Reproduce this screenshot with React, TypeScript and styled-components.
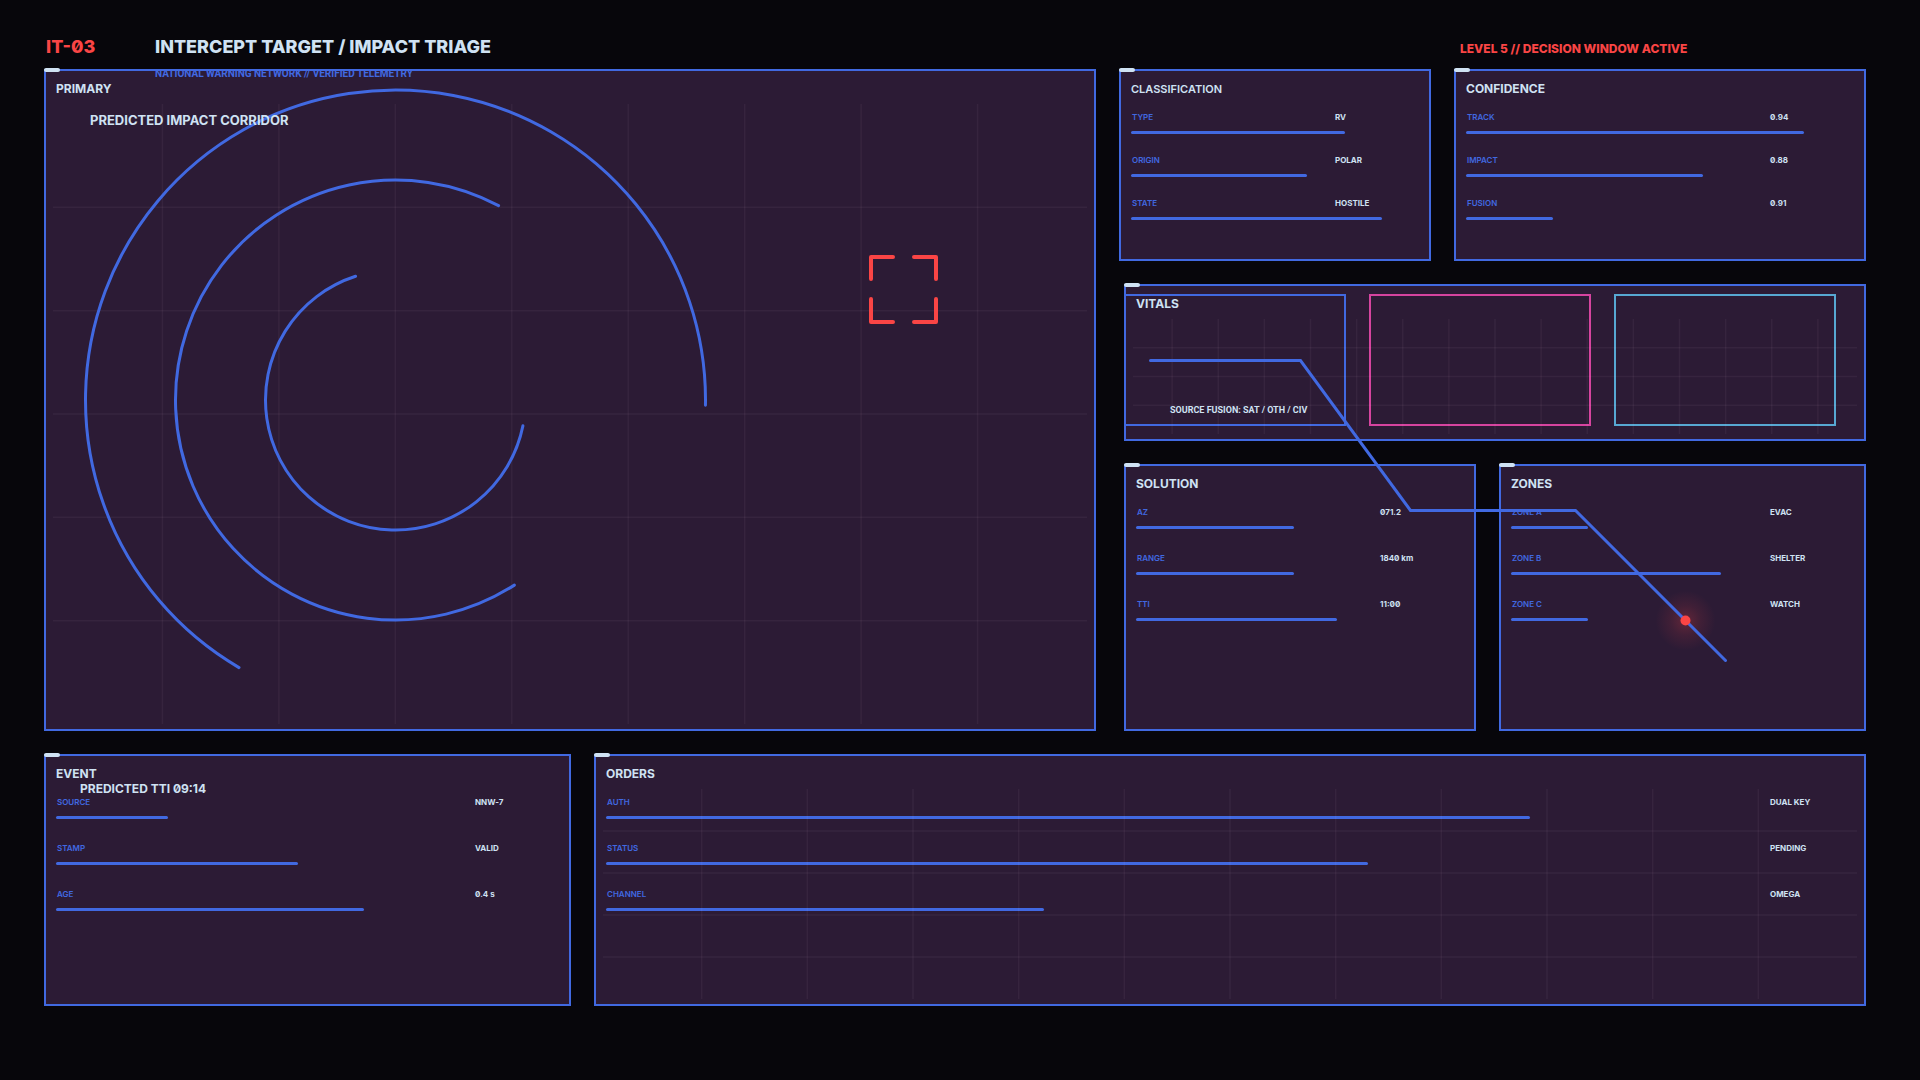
import React from 'react';
import styled, { createGlobalStyle } from 'styled-components';

const color = {
  page: '#07060b',
  panel: '#2c1b35',
  blue: '#4169e1',
  ice: '#cfe2f3',
  red: '#fa4545',
  pink: '#d6449f',
  cyan: '#57a8d2',
  grid: 'rgba(255, 220, 240, 0.05)',
};

const GlobalStyle = createGlobalStyle`
  * { box-sizing: border-box; }
  body {
    margin: 0;
    background: ${color.page};
    color: ${color.ice};
    font-family: Inter, Roboto, "Liberation Sans", sans-serif;
    font-feature-settings: "zero" 1;
  }
  h1, h2, p, dl, dd { margin: 0; font-weight: inherit; }
`;

const Page = styled.main`
  min-height: 100vh;
  padding: 37px 54px 24px 44px;
`;

const Header = styled.header`
  display: grid;
  grid-template-columns: 109px 1fr 406px;
  height: 32px;
  padding-left: 2px;
  line-height: 20px;
  font-weight: 800;
`;

const Code = styled.span`
  color: ${color.red};
  font-size: 18px;
`;

const TitleBlock = styled.div`
  position: relative;
  z-index: 1;
`;

const Title = styled.h1`
  font-size: 18px;
`;

const Subtitle = styled.p`
  margin-top: 10px;
  line-height: 14px;
  font-family: Roboto, "Liberation Sans", sans-serif;
  font-size: 10px;
  font-weight: 700;
  color: ${color.blue};
`;

const Alert = styled.p`
  padding-top: 2px;
  font-size: 12px;
  color: ${color.red};
`;

const Board = styled.div`
  display: flex;
  flex-direction: column;
  gap: 23px;
`;

const Split = styled.div<{ $columns: string }>`
  display: grid;
  grid-template-columns: ${(p) => p.$columns};
  gap: 23px;
`;

const SideColumn = styled.div`
  position: relative;
  display: flex;
  flex-direction: column;
  gap: 23px;
`;

const Inset = styled.div`
  display: flex;
  flex-direction: column;
  gap: 23px;
  padding-left: 5px;
`;

const PanelBox = styled.section<{ $minHeight: number }>`
  position: relative;
  min-width: 0;
  min-height: ${(p) => p.$minHeight}px;
  padding: 10px 12px 10px 10px;
  border: 2px solid ${color.blue};
  background: ${color.panel};

  &::before {
    content: '';
    position: absolute;
    top: -3px;
    left: -2px;
    width: 16px;
    height: 4px;
    border-radius: 2px;
    background: ${color.ice};
  }
`;

const PanelHead = styled.div`
  position: relative;
  min-height: 30px;
`;

const PanelTitle = styled.h2<{ $small?: boolean }>`
  font-size: ${(p) => (p.$small ? 11 : 12)}px;
  line-height: 16px;
  font-weight: ${(p) => (p.$small ? 600 : 700)};
`;

const Caption = styled.p`
  padding-left: 24px;
  font-size: 12px;
  line-height: 14px;
  font-weight: 700;
`;

const CorridorCaption = styled.p`
  position: relative;
  padding: 1px 34px 0;
  font-size: 13px;
  line-height: 16px;
  font-weight: 700;
`;

const Readings = styled.dl<{ $gap: number }>`
  display: flex;
  flex-direction: column;
  gap: ${(p) => p.$gap}px;
  position: relative;
`;

const Reading = styled.div`
  display: grid;
  grid-template-columns: 1fr 82px;
  row-gap: 8px;
  font-size: 8px;
  line-height: 12px;
  font-weight: 600;
`;

const Label = styled.dt`
  padding-left: 1px;
  color: ${color.blue};
`;

const Value = styled.dd`
  font-weight: 700;
  white-space: nowrap;
`;

const Bar = styled.dd`
  grid-column: 1 / -1;
  height: 3px;
  border-radius: 2px;
  background: ${color.blue};
`;

const GridLayer = styled.svg<{ $inset: number }>`
  position: absolute;
  top: 33px;
  left: ${(p) => p.$inset}px;
  width: calc(100% - ${(p) => p.$inset * 2}px);
  height: calc(100% - 38px);
  pointer-events: none;
  stroke: ${color.grid};
  stroke-width: 1.5px;
`;

const Drawing = styled.svg`
  position: absolute;
  top: -2px;
  left: -2px;
  overflow: visible;
  pointer-events: none;
  fill: none;
  stroke-width: 3px;
  stroke-linecap: round;
`;

const Bracket = styled.g`
  stroke: ${color.red};
  stroke-width: 4px;
  stroke-linejoin: round;
`;

const Route = styled(Drawing)`
  top: 0;
  left: 0;
`;

const Channels = styled.div`
  position: absolute;
  inset: 8px 28px 13px -2px;
  display: grid;
  grid-template-columns: repeat(3, 1fr);
  gap: 23px;
`;

const Channel = styled.div<{ $color: string }>`
  display: flex;
  align-items: flex-end;
  padding: 0 0 7px 44px;
  border: 2px solid ${(p) => p.$color};
  font-family: Roboto, "Liberation Sans", sans-serif;
  font-size: 9px;
  line-height: 14px;
  font-weight: 700;
  white-space: nowrap;
`;

type Item = { label: string; value: string; level: number };

function Grid({ cols, rows }: { cols: number; rows: number }) {
  const at = (k: number, n: number) => `${(100 * k) / n}%`;
  return (
    <>
      <GridLayer $inset={0} aria-hidden="true">
        {Array.from({ length: cols - 1 }, (_, i) => (
          <line key={i} x1={at(i + 1, cols)} x2={at(i + 1, cols)} y1="0" y2="100%" />
        ))}
      </GridLayer>
      <GridLayer $inset={7} aria-hidden="true">
        {Array.from({ length: rows - 1 }, (_, i) => (
          <line key={i} y1={at(i + 1, rows)} y2={at(i + 1, rows)} x1="0" x2="100%" />
        ))}
      </GridLayer>
    </>
  );
}

type PanelProps = {
  title: string;
  height: number;
  small?: boolean;
  caption?: string;
  gap?: number;
  items?: Item[];
  children?: React.ReactNode;
};

function Panel({ title, height, small, caption, gap = 23, items, children }: PanelProps) {
  return (
    <PanelBox $minHeight={height}>
      <PanelHead>
        <PanelTitle $small={small}>{title}</PanelTitle>
        {caption && <Caption>{caption}</Caption>}
      </PanelHead>
      {items && (
        <Readings $gap={gap}>
          {items.map((item) => (
            <Reading key={item.label}>
              <Label>{item.label}</Label>
              <Value>{item.value}</Value>
              <Bar aria-hidden="true" style={{ width: `calc(${item.level}% + 2px)` }} />
            </Reading>
          ))}
        </Readings>
      )}
      {children}
    </PanelBox>
  );
}

const classification: Item[] = [
  { label: 'TYPE', value: 'RV', level: 74 },
  { label: 'ORIGIN', value: 'POLAR', level: 61 },
  { label: 'STATE', value: 'HOSTILE', level: 87 },
];
const confidence: Item[] = [
  { label: 'TRACK', value: '0.94', level: 87 },
  { label: 'IMPACT', value: '0.88', level: 61 },
  { label: 'FUSION', value: '0.91', level: 22 },
];
const solution: Item[] = [
  { label: 'AZ', value: '071.2', level: 48 },
  { label: 'RANGE', value: '1840 km', level: 48 },
  { label: 'TTI', value: '11:00', level: 61 },
];
const zones: Item[] = [
  { label: 'ZONE A', value: 'EVAC', level: 22 },
  { label: 'ZONE B', value: 'SHELTER', level: 61 },
  { label: 'ZONE C', value: 'WATCH', level: 22 },
];
const eventItems: Item[] = [
  { label: 'SOURCE', value: 'NNW-7', level: 22 },
  { label: 'STAMP', value: 'VALID', level: 48 },
  { label: 'AGE', value: '0.4 s', level: 61 },
];
const orders: Item[] = [
  { label: 'AUTH', value: 'DUAL KEY', level: 74 },
  { label: 'STATUS', value: 'PENDING', level: 61 },
  { label: 'CHANNEL', value: 'OMEGA', level: 35 },
];

// Each ring sweeps 4.2 radians clockwise from its start angle.
const rings = [
  { r: 310, start: 2.1 },
  { r: 220, start: 1 },
  { r: 130, start: 0.2 },
];

function ringPath(r: number, start: number) {
  const cx = 351.5;
  const cy = 331;
  const point = (a: number) => `${(cx + r * Math.cos(a)).toFixed(2)} ${(cy + r * Math.sin(a)).toFixed(2)}`;
  return `M${point(start)} A${r} ${r} 0 1 1 ${point(start + 4.2)}`;
}

export default function App() {
  return (
    <Page>
      <GlobalStyle />
      <Header>
        <Code>IT-03</Code>
        <TitleBlock>
          <Title>INTERCEPT TARGET / IMPACT TRIAGE</Title>
          <Subtitle>NATIONAL WARNING NETWORK // VERIFIED TELEMETRY</Subtitle>
        </TitleBlock>
        <Alert>LEVEL 5 // DECISION WINDOW ACTIVE</Alert>
      </Header>
      <Board>
        <Split $columns="1052fr 747fr">
          <Panel title="PRIMARY" height={662}>
            <Grid cols={9} rows={6} />
            <Drawing width="1052" height="662" aria-hidden="true">
              {rings.map((ring) => (
                <path key={ring.r} d={ringPath(ring.r, ring.start)} stroke={color.blue} />
              ))}
              <Bracket>
                <path d="M827 210V188H849" />
                <path d="M870 188H892V210" />
                <path d="M892 230V253H870" />
                <path d="M849 253H827V230" />
              </Bracket>
            </Drawing>
            <CorridorCaption>PREDICTED IMPACT CORRIDOR</CorridorCaption>
          </Panel>
          <SideColumn>
            <Split $columns="312fr 412fr">
              <Panel title="CLASSIFICATION" small height={192} gap={20} items={classification} />
              <Panel title="CONFIDENCE" height={192} gap={20} items={confidence} />
            </Split>
            <Inset>
              <Panel title="VITALS" height={157}>
                <Channels>
                  <Channel $color={color.blue}>SOURCE FUSION: SAT / OTH / CIV</Channel>
                  <Channel $color={color.pink} />
                  <Channel $color={color.cyan} />
                </Channels>
                <Grid cols={16} rows={4} />
              </Panel>
              <Split $columns="352fr 367fr">
                <Panel title="SOLUTION" height={267} items={solution} />
                <Panel title="ZONES" height={267} items={zones} />
              </Split>
            </Inset>
            <Route width="747" height="662" aria-hidden="true">
              <defs>
                <radialGradient id="impact-glow">
                  <stop offset="0" stopColor={color.red} stopOpacity="0.26" />
                  <stop offset="0.5" stopColor={color.red} stopOpacity="0.1" />
                  <stop offset="1" stopColor={color.red} stopOpacity="0" />
                </radialGradient>
              </defs>
              <circle cx="566.5" cy="551.5" r="30" fill="url(#impact-glow)" />
              <path d="M31.5 291.5H181.5L291.5 441.5H456.5L606.5 591.5" stroke={color.blue} />
              <circle cx="566.5" cy="551.5" r="5" fill={color.red} />
            </Route>
          </SideColumn>
        </Split>
        <Split $columns="527fr 1272fr">
          <Panel title="EVENT" caption="PREDICTED TTI 09:14" height={252} items={eventItems} />
          <Panel title="ORDERS" height={252} items={orders}>
            <Grid cols={12} rows={5} />
          </Panel>
        </Split>
      </Board>
    </Page>
  );
}
